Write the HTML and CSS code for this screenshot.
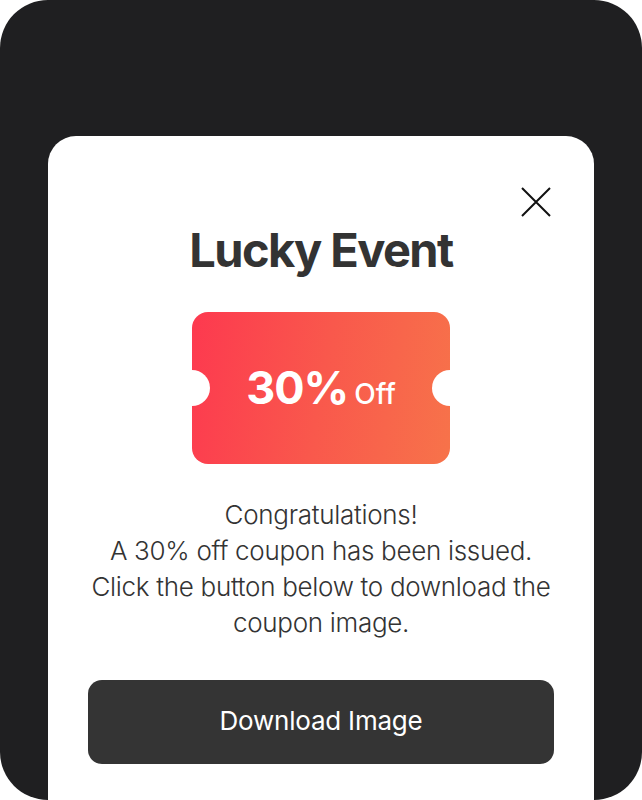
FILE: index.html
```html
<!DOCTYPE html>
<html lang="en">
<head>
    <meta charset="utf-8" />
    <title>Lucky Event</title>
    <link rel="stylesheet" href="styles.css">
</head>
<body>
    <div class="screen">
        <div class="modal">
            <button class="btn-close" aria-label="Close">
                <svg width="30" height="30" viewBox="0 0 30 30">
                    <path d="M1 1 L29 29 M29 1 L1 29" stroke="#111" stroke-width="2" fill="none" />
                </svg>
            </button>
            <h1 class="title">Lucky Event</h1>
            <div class="coupon">
                <span class="coupon-rate">30%</span><span class="coupon-off">Off</span>
            </div>
            <p class="message">Congratulations!<br />A 30% off coupon has been issued.<br />Click the button below to download the coupon image.</p>
            <button class="btn-download">Download Image</button>
        </div>
    </div>
</body>
</html>
```

FILE: styles.css
```css
:root {
    --dark: #1f1f21;
    --text: #333;
}
html, body {
    margin: 0;
    background: #fff;
}
body {
    font-family: Inter, "Noto Sans", sans-serif;
    color: var(--text);
}
.screen {
    height: 800px;
    background: var(--dark);
    border-radius: 48px;
    padding: 136px 48px 0;
    box-sizing: border-box;
    overflow: hidden;
    display: flex;
    flex-direction: column;
}
.modal {
    position: relative;
    flex: 1;
    background: #fff;
    border-radius: 28px 28px 0 0;
    padding: 86px 40px 0;
    display: flex;
    flex-direction: column;
    align-items: center;
}
.btn-close {
    position: absolute;
    top: 51px;
    right: 43px;
    width: 30px;
    height: 30px;
    padding: 0;
    border: none;
    background: none;
}
.btn-close svg {
    display: block;
}
.title {
    margin: 0;
    font-size: 47px;
    line-height: 56px;
    font-weight: 700;
    letter-spacing: -1.6px;
}
.coupon {
    position: relative;
    margin-top: 34px;
    width: 258px;
    height: 152px;
    border-radius: 16px;
    background: linear-gradient(100deg, #fd394f 0%, #f9584c 50%, #f7734a 100%);
    color: #fff;
    display: flex;
    align-items: baseline;
    justify-content: center;
    line-height: 152px;
}
.coupon::before, .coupon::after {
    content: "";
    position: absolute;
    top: 58px;
    width: 36px;
    height: 36px;
    border-radius: 50%;
    background: #fff;
}
.coupon::before {
    left: -18px;
}
.coupon::after {
    right: -18px;
}
.coupon-rate {
    font-size: 45px;
    font-weight: 700;
    letter-spacing: -1px;
}
.coupon-off {
    margin-left: 6px;
    font-size: 28px;
    font-weight: 500;
}
.message {
    margin: 33px 0 0;
    font-size: 26px;
    line-height: 36px;
    font-weight: 300;
    text-align: center;
    letter-spacing: -0.3px;
}
.btn-download {
    margin-top: 39px;
    width: 100%;
    height: 84px;
    padding: 0 0 4px;
    border: none;
    border-radius: 14px;
    background: #343434;
    color: #fff;
    font-family: inherit;
    font-size: 26px;
    font-weight: 400;
    letter-spacing: -0.2px;
}
```
